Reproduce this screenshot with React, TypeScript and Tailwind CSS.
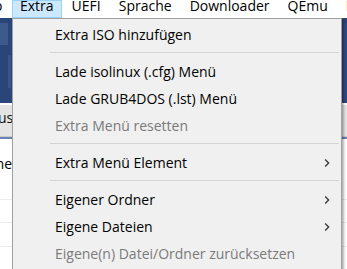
import React from 'react';

type Entry =
  | { kind: 'item'; label: string; disabled?: boolean; sub?: boolean }
  | { kind: 'sep' };

const entries: Entry[] = [
  { kind: 'item', label: 'Extra ISO hinzufügen' },
  { kind: 'sep' },
  { kind: 'item', label: 'Lade isolinux (.cfg) Menü' },
  { kind: 'item', label: 'Lade GRUB4DOS (.lst) Menü' },
  { kind: 'item', label: 'Extra Menü resetten', disabled: true },
  { kind: 'sep' },
  { kind: 'item', label: 'Extra Menü Element', sub: true },
  { kind: 'sep' },
  { kind: 'item', label: 'Eigener Ordner', sub: true },
  { kind: 'item', label: 'Eigene Dateien', sub: true },
  { kind: 'item', label: 'Eigene(n) Datei/Ordner zurücksetzen', disabled: true },
];

const bar = ['UEFI', 'Sprache', 'Downloader', 'QEmu', 'F'];

function Chevron() {
  return (
    <svg width="6" height="10" viewBox="0 0 6 10" className="shrink-0">
      <polyline points="1.2,1.5 4.6,5 1.2,8.5" fill="none" stroke="#3c3c3c" strokeWidth="1.4" />
    </svg>
  );
}

export default function App() {
  return (
    <div className="relative w-[347px] h-[269px] overflow-hidden bg-white font-['Open_Sans','Noto_Sans',sans-serif] text-[14px] text-black">
      {/* menubar */}
      <div className="flex h-[18px] bg-white whitespace-nowrap">
        <span className="ml-[-6px] w-[18px] h-[18px] shrink-0 leading-[12px]">o</span>
        <div className="h-[18px] px-[7px] border border-[#99d1ff] bg-[#cce8ff] shrink-0 leading-[10px]">
          Extra
        </div>
        {bar.map((b) => (
          <div key={b} className="ml-[2px] h-[18px] px-[8px] shrink-0 leading-[12px]">
            {b}
          </div>
        ))}
      </div>

      {/* app content behind the menu */}
      <div className="h-[85px] bg-[#2a4577] flex pt-[5px]">
        <div className="w-[8px] h-[22px] bg-[#3d5a8e]" />
        <div className="w-[3px] h-[33px] mt-[32px] bg-[#3a5689]" />
        <div className="flex-1" />
        <div className="w-[4px] h-[80px] bg-[#2c4a80]" />
      </div>
      <div className="h-[2px] bg-white" />
      <div className="h-[32px] bg-[#e4e4e4] flex items-center border-b border-[#c9c9c9]">
        <span className="ml-[-14px] mt-[-6px] text-[#111]">Plus</span>
      </div>
      <div className="h-[2px] bg-[#6b82b3]" />
      <div className="bg-white">
        <div className="h-[60px] flex items-start pt-[14px]">
          <span className="ml-[-27px]">Name</span>
        </div>
        <div className="h-[23px] border-t border-[#ececec]" />
        <div className="h-[24px] border-t border-[#ececec]" />
        <div className="h-[24px] border-t border-[#ececec]" />
      </div>

      {/* dropdown menu */}
      <div className="absolute left-[12px] top-[18px] w-[330px] h-[260px] bg-[#f0f0f0] border border-[#a0a0a0] shadow-[2px_2px_2px_rgba(0,0,0,0.3)] pt-[2px]">
        {entries.map((e, i) =>
          e.kind === 'sep' ? (
            <div key={i} className="h-[10px] pt-[4px] pl-[37px] pr-[2px]">
              <div className="h-[1px] bg-[#d4d4d4]" />
            </div>
          ) : (
            <div
              key={i}
              className={`h-[27px] flex items-center pl-[42px] pr-[11px] whitespace-nowrap ${e.disabled ? 'text-[#7a7a7a]' : 'text-black'}`}
            >
              <span className="flex-1 leading-[19px]">{e.label}</span>
              {e.sub && <Chevron />}
            </div>
          )
        )}
      </div>
    </div>
  );
}
